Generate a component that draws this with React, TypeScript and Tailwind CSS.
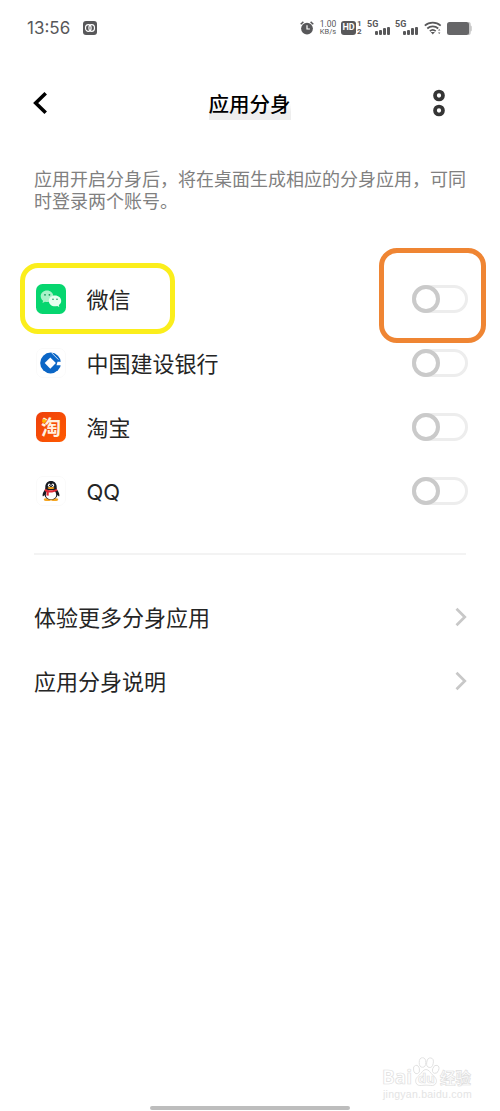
import type { ReactNode } from "react";

type AppItem = {
  id: string;
  name: string;
  icon: ReactNode;
};

function WechatIcon() {
  return (
    <svg viewBox="0 0 30 30" className="size-[30px]">
      <rect width="30" height="30" rx="6.5" fill="#06d66f" />
      <path d="M11 6.500C7.400 6.500 4.700 9 4.700 12.300c0 1.900.9 3.500 2.400 4.500l-.6 2.300 2.500-1.300c.7.200 1.400.3 2 .3 3.600 0 6.300-2.600 6.300-5.800S14.600 6.500 11 6.500z" fill="#a9f2c8" />
      <path d="M19 11.500c-3.500 0-6.200 2.400-6.200 5.400s2.700 5.300 6.200 5.300c.8 0 1.500-.1 2.200-.3l2.100 1.100-.5-1.900c1.500-1 2.400-2.500 2.400-4.200 0-3-2.700-5.400-6.200-5.400z" fill="#e6fff0" />
      <circle cx="9" cy="10.8" r="0.9" fill="#119b58" />
      <circle cx="13.4" cy="10.8" r="0.9" fill="#119b58" />
      <circle cx="17" cy="15.3" r="0.8" fill="#119b58" />
      <circle cx="21" cy="15.3" r="0.8" fill="#119b58" />
    </svg>
  );
}

function BankIcon() {
  return (
    <svg viewBox="0 0 30 30" className="size-[30px]">
      <rect x="0.5" y="0.5" width="29" height="29" rx="6.5" fill="#fff" stroke="#fafafa" />
      <circle cx="14.6" cy="15" r="10.4" fill="#0b66c6" />
      <path d="M21.500 13.800h5v3.400h-6z" fill="#fff" />
      <path d="M14.300 9.500l5.600 5.600-5.600 5.600-5.600-5.600z" fill="#fff" />
      <path d="M15.800 5l6.600 6.600" stroke="#fff" strokeWidth="0.8" />
    </svg>
  );
}

function TaobaoIcon() {
  return (
    <div className="relative flex size-[30px] items-center justify-center rounded-[6.5px] bg-linear-to-br from-[#ee3f0b] to-[#ff5a00]">
      <span className="font-['Noto_Sans_CJK_SC',sans-serif] text-[20px] leading-none font-bold text-[#fff0df]">淘</span>
      <span className="absolute top-[7px] left-[6px] size-[4px] rounded-full bg-[#ffb300]" />
    </div>
  );
}

function QQIcon() {
  return (
    <svg viewBox="0 0 30 30" className="size-[30px]">
      <rect x="0.5" y="0.5" width="29" height="29" rx="6.5" fill="#fff" stroke="#fafafa" />
      <ellipse cx="11.5" cy="23.6" rx="3.7" ry="1.5" fill="#f5a623" />
      <ellipse cx="18.5" cy="23.6" rx="3.7" ry="1.5" fill="#f5a623" />
      <path d="M15 5c-3.600 0-5.700 2.700-5.700 6 0 1.500-.1 2.300-.8 3.300-1.300 1.900-2 3.600-1.900 5.400.1 1 .9.600 1.800-.8.800 3 3.400 4.700 6.600 4.700s5.800-1.700 6.600-4.700c.9 1.400 1.700 1.800 1.800.8.100-1.800-.6-3.500-1.900-5.400-.7-1-.8-1.800-.8-3.300 0-3.300-2.100-6-5.700-6z" fill="#171a22" />
      <path d="M15 14c-3.300 0-5.200 1.900-5.200 4.700 0 2.800 2.100 4.500 5.200 4.500s5.200-1.700 5.200-4.500c0-2.800-1.900-4.700-5.200-4.700z" fill="#fff" />
      <ellipse cx="13.2" cy="9.2" rx="1.3" ry="1.8" fill="#fff" />
      <ellipse cx="16.8" cy="9.2" rx="1.3" ry="1.8" fill="#fff" />
      <circle cx="13.6" cy="9.4" r="0.6" fill="#111" />
      <circle cx="16.4" cy="9.4" r="0.6" fill="#111" />
      <ellipse cx="15" cy="11.9" rx="3.3" ry="1" fill="#f7a21b" />
      <path d="M9.300 12.800c3.500 2 7.900 2 11.400 0l.6 2c-2.700 1.500-5.600 2-8.600 1.700v3.200l-2.300-.3.200-3.500-1.900-1z" fill="#e02a38" />
    </svg>
  );
}

const apps: AppItem[] = [
  { id: "wechat", name: "微信", icon: <WechatIcon /> },
  { id: "ccb", name: "中国建设银行", icon: <BankIcon /> },
  { id: "taobao", name: "淘宝", icon: <TaobaoIcon /> },
  { id: "qq", name: "QQ", icon: <QQIcon /> },
];

const links = ["体验更多分身应用", "应用分身说明"];

function Signal() {
  return (
    <div className="relative h-[16px] w-[23px]">
      <span className="absolute top-0 left-0 font-['Roboto',sans-serif] text-[9px] leading-[9px] font-bold">5G</span>
      <div className="absolute right-0 bottom-[1px] flex items-end gap-[1px]">
        <i className="h-[4px] w-[3px] rounded-[1px] bg-[#58585a]" />
        <i className="h-[5px] w-[3px] rounded-[1px] bg-[#58585a]" />
        <i className="h-[7px] w-[3px] rounded-[1px] bg-[#58585a]" />
        <i className="h-[8px] w-[3px] rounded-[1px] bg-[#58585a]" />
      </div>
    </div>
  );
}

function StatusBar() {
  return (
    <div className="flex h-[56px] items-center pr-[28px] pl-[27px] text-[#58585a]">
      <span className="mt-[2px] w-[44px] font-['Inter',sans-serif] text-[17px] whitespace-nowrap">13:56</span>
      <svg viewBox="0 0 14 14" className="ml-[12px] size-[14px]">
        <rect width="14" height="14" rx="3" fill="#58585a" />
        <ellipse cx="5.3" cy="7" rx="2.8" ry="3.3" fill="none" stroke="#fff" strokeWidth="1.2" />
        <ellipse cx="8.7" cy="7" rx="2.8" ry="3.3" fill="none" stroke="#fff" strokeWidth="1.2" />
      </svg>

      <div className="ml-auto flex items-center">
        <svg viewBox="0 0 14 14" className="size-[14px]">
          <circle cx="7" cy="7.6" r="5.9" fill="#58585a" />
          <path d="M.7 3.300L3.400.9M13.300 3.300L10.600.9" stroke="#58585a" strokeWidth="1.5" />
          <path d="M7 4.300v3.700h2.900" fill="none" stroke="#fff" strokeWidth="1.2" />
        </svg>
        <div className="ml-[5px] w-[18px] text-center font-['Roboto',sans-serif] text-[8.5px] leading-[8px]">
          <div>1.00</div>
          <div className="text-[7.5px]">KB/s</div>
        </div>
        <div className="ml-[4px] flex h-[14px] w-[15px] items-center justify-center rounded-[3px] bg-[#58585a] font-['Roboto',sans-serif] text-[9px] font-bold text-white">
          HD
        </div>
        <div className="ml-[1px] w-[5px] font-['Roboto',sans-serif] text-[8px] leading-[8px] font-bold">
          <div>1</div>
          <div>2</div>
        </div>
        <div className="ml-[5px]">
          <Signal />
        </div>
        <div className="ml-[5px]">
          <Signal />
        </div>
        <svg viewBox="0 0 18 14" className="ml-[6px] h-[14px] w-[18px]" fill="none" stroke="#58585a">
          <path d="M.8 4.700c4.500-4 11.400-4 15.900 0" strokeWidth="1.7" />
          <path d="M3.300 7.500c3.100-2.800 7.800-2.800 10.900 0" strokeWidth="1.7" />
          <path d="M5.800 10.100c1.700-1.500 4.200-1.500 5.900 0" strokeWidth="1.6" />
          <path d="M6.700 11.100h4.200l-2.100 2.400z" fill="#58585a" stroke="none" />
          <path d="M14 9.500l1.200-1.500 1.200 1.500zM14 11.500l1.200 1.500 1.200-1.500z" fill="#58585a" stroke="none" />
        </svg>
        <svg viewBox="0 0 25 13" className="ml-[5px] h-[13px] w-[25px]">
          <path d="M21 0h.7c1.200 0 2 .8 2 2v1.500c.8.300 1.100.8 1.100 1.500v3c0 .7-.3 1.200-1.100 1.500V11c0 1.200-.8 2-2 2H21z" fill="#c8c8c8" />
          <rect width="22" height="13" rx="2.5" fill="#666668" />
        </svg>
      </div>
    </div>
  );
}

function Toggle() {
  return (
    <div className="h-[28px] w-[56px] rounded-full border-[3px] border-[#ededed]">
      <div className="-mt-[3px] -ml-[3px] size-[28px] rounded-full border-4 border-[#cacaca] bg-white" />
    </div>
  );
}

function Watermark() {
  return (
    <div className="absolute top-[1055px] left-[382px] h-[46px] w-[92px] text-white [-webkit-text-stroke:0.7px_#dedede]">
      <span className="absolute top-[11px] left-0 font-['Open_Sans',sans-serif] text-[19px] leading-[22px] font-bold">Bai</span>
      <svg viewBox="0 0 28 32" className="absolute top-[1px] left-[30px] h-[32px] w-[28px]" fill="#fff" stroke="#e0e0e0" strokeWidth="0.9">
        <ellipse cx="4.5" cy="13.5" rx="3" ry="4.2" transform="rotate(-12 4.5 13.5)" />
        <ellipse cx="10.5" cy="6.5" rx="3.3" ry="4.8" />
        <ellipse cx="18" cy="6.7" rx="3.3" ry="4.8" transform="rotate(10 18 6.7)" />
        <ellipse cx="23.7" cy="13.3" rx="3" ry="4.2" transform="rotate(20 23.7 13.3)" />
        <path d="M14 13.500c-3 0-4.200 3.400-6.500 5.400-2.800 2.400-4.500 4.400-3.600 7.600.8 2.800 3.200 3.300 6 2.900 2.800-.4 5.500-.4 8.300 0 2.800.4 5.200-.1 6-2.900.9-3.200-.8-5.200-3.600-7.600-2.300-2-3.600-5.400-6.600-5.400z" />
      </svg>
      <span className="absolute top-[14px] left-[36px] font-['Open_Sans',sans-serif] text-[13px] leading-[18px] font-bold">du</span>
      <span className="absolute top-[13px] left-[58px] font-['Noto_Sans_CJK_SC',sans-serif] text-[15.5px] leading-[18px] font-bold whitespace-nowrap">经验</span>
      <span className="absolute top-[33px] left-[1px] font-['Liberation_Sans',sans-serif] text-[10.5px] leading-[12px] tracking-[0.25px] text-[#e4e4e4] [-webkit-text-stroke:0]">
        jingyan.baidu.com
      </span>
    </div>
  );
}

export default function App() {
  return (
    <main className="relative h-[1111px] w-[500px] overflow-hidden bg-white font-['Noto_Sans_CJK_SC',sans-serif] text-[#252525]">
      <StatusBar />

      <header className="flex h-[94px] items-center justify-between pr-[54px] pl-[33px]">
        <svg viewBox="0 0 15 22" className="h-[22px] w-[15px]" fill="none" stroke="#000" strokeWidth="3.6">
          <path d="M12.700 1.300L2.700 11l10 9.700" />
        </svg>
        <h1 className="mt-[2px] ml-[19px] h-[32px] bg-linear-to-b from-white from-50% to-[#eee] to-75% text-[20.5px] leading-[31px] font-medium text-black">
          应用分身
        </h1>
        <svg viewBox="0 0 14 28" className="h-[28px] w-[14px]" fill="none" stroke="#353535" strokeWidth="3.7">
          <circle cx="7" cy="6.5" r="4" />
          <circle cx="7" cy="21.5" r="4" />
        </svg>
      </header>

      <div className="mt-[18px] ml-[34px] text-[18px] leading-[21.5px] text-[#808080]">
        <p>应用开启分身后，将在桌面生成相应的分身应用，可同</p>
        <p>时登录两个账号。</p>
      </div>

      <ul className="mt-[56px] pr-[32px] pl-[36px]">
        {apps.map((app) => (
          <li key={app.id} className="flex h-[64px] items-center">
            {app.icon}
            <span className="mt-[1px] ml-[20.5px] font-['Inter','Noto_Sans_CJK_SC',sans-serif] text-[22px] leading-[32px]">
              {app.name}
            </span>
            <div className="ml-auto">
              <Toggle />
            </div>
          </li>
        ))}
      </ul>

      <div className="mx-[34px] mt-[29.5px] h-[2px] bg-[#f3f3f3]" />

      <ul className="mt-[30.5px] pr-[33px] pl-[34px]">
        {links.map((label) => (
          <li key={label} className="flex h-[64px] items-center justify-between">
            <span className="mb-[3px] text-[22px] leading-[32px]">{label}</span>
            <svg viewBox="0 0 12 20" className="h-[20px] w-[12px]" fill="none" stroke="#c8c8c8" strokeWidth="2.7">
              <path d="M1.500 1.700L9.800 10l-8.300 8.300" />
            </svg>
          </li>
        ))}
      </ul>

      {/* Highlight frames over the list */}
      <div className="absolute top-[263px] left-[20px] h-[71px] w-[155px] rounded-[18px] border-[5px] border-[#fbee1c]" />
      <div className="absolute top-[248px] left-[379px] h-[95px] w-[107px] rounded-[18px] border-[5px] border-[#ef8533]" />

      <Watermark />
      <div className="absolute top-[1106px] left-[150px] h-[4px] w-[200px] rounded-full bg-[#bdbdbd]" />
    </main>
  );
}
